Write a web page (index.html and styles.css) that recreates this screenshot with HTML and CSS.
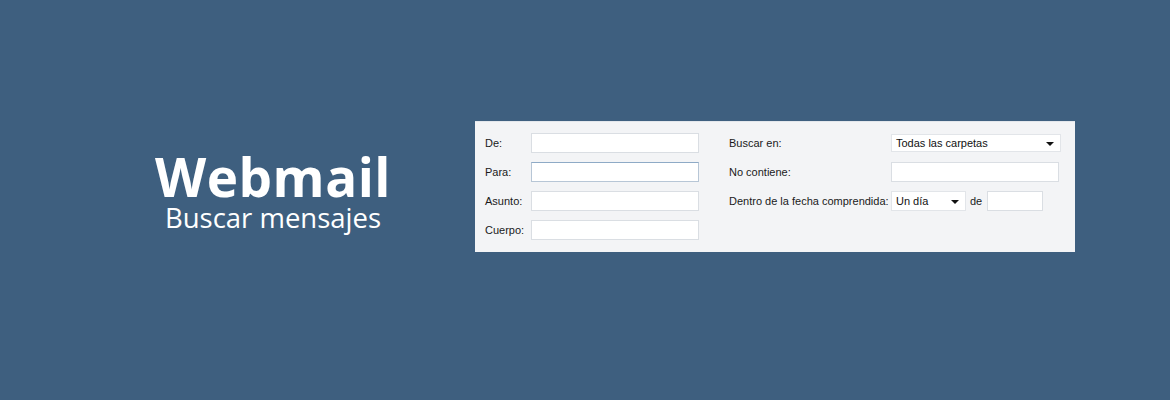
FILE: index.html
```html
<!DOCTYPE html>
<html lang="es">
<head>
<meta charset="utf-8">
<title>Webmail - Buscar mensajes</title>
<link rel="stylesheet" href="styles.css">
</head>
<body>
<main class="stage">
  <header class="title">
    <h1 class="title-main">Webmail</h1>
    <p class="title-sub">Buscar mensajes</p>
  </header>
  <section class="panel">
    <div class="col col-left">
      <div class="row"><label class="lbl lbl-left">De:</label><span class="field field-left"></span></div>
      <div class="row"><label class="lbl lbl-left">Para:</label><span class="field field-left field-focus"></span></div>
      <div class="row"><label class="lbl lbl-left">Asunto:</label><span class="field field-left"></span></div>
      <div class="row"><label class="lbl lbl-left">Cuerpo:</label><span class="field field-left"></span></div>
    </div>
    <div class="col col-right">
      <div class="row"><label class="lbl lbl-right">Buscar en:</label><span class="select select-wide"><span class="select-text">Todas las carpetas</span><span class="arrow"></span></span></div>
      <div class="row"><label class="lbl lbl-right">No contiene:</label><span class="field field-right"></span></div>
      <div class="row"><label class="lbl lbl-right">Dentro de la fecha comprendida:</label><span class="select select-small"><span class="select-text">Un día</span><span class="arrow"></span></span><span class="de">de</span><span class="field field-date"></span></div>
    </div>
  </section>
</main>
</body>
</html>
```

FILE: styles.css
```css
html, body {
  margin: 0;
  padding: 0;
}
body {
  background: #3e5f7f;
  width: 1170px;
  height: 400px;
  overflow: hidden;
  font-family: "Liberation Sans", Arial, sans-serif;
}
.stage {
  display: flex;
  align-items: flex-start;
  padding-top: 121px;
}
.title {
  width: 300px;
  margin-left: 123px;
  margin-right: 52px;
  margin-top: 31px;
  text-align: center;
  color: #ffffff;
  font-family: "Open Sans", sans-serif;
}
.title-main {
  margin: 0;
  font-size: 53px;
  font-weight: 700;
  line-height: 50px;
  letter-spacing: 0.5px;
}
.title-sub {
  margin: 0;
  font-size: 27.5px;
  font-weight: 400;
  line-height: 32px;
}
.panel {
  width: 600px;
  height: 131px;
  box-sizing: border-box;
  background: #f3f4f6;
  border-top: 1px solid #e3e7ec;
  display: flex;
  padding: 11px 0 0 10px;
  gap: 30px;
}
.col {
  display: flex;
  flex-direction: column;
  gap: 9px;
}
.row {
  display: flex;
  align-items: center;
  height: 20px;
}
.lbl {
  font-size: 11px;
  color: #1a1a1a;
}
.lbl-left {
  width: 46px;
}
.lbl-right {
  width: 162px;
}
.field {
  display: block;
  height: 20px;
  box-sizing: border-box;
  background: #ffffff;
  border: 1px solid #dadee3;
}
.field-left {
  width: 168px;
}
.field-focus {
  border-color: #b7c6d6;
  border-top-color: #8eaac6;
}
.field-right {
  width: 168px;
}
.field-date {
  width: 56px;
}
.select {
  display: flex;
  align-items: center;
  justify-content: space-between;
  height: 18px;
  box-sizing: border-box;
  background: #ffffff;
  border: 1px solid #e2e5e9;
  padding: 0 6px 0 4px;
  font-size: 11px;
  color: #111111;
}
.select-wide {
  width: 170px;
}
.select-small {
  width: 75px;
  height: 20px;
}
.arrow {
  width: 0;
  height: 0;
  border-left: 4px solid transparent;
  border-right: 4px solid transparent;
  border-top: 4px solid #111111;
  margin-top: 2px;
}
.de {
  font-size: 11px;
  color: #1a1a1a;
  margin: 0 5px 0 4px;
}
```
